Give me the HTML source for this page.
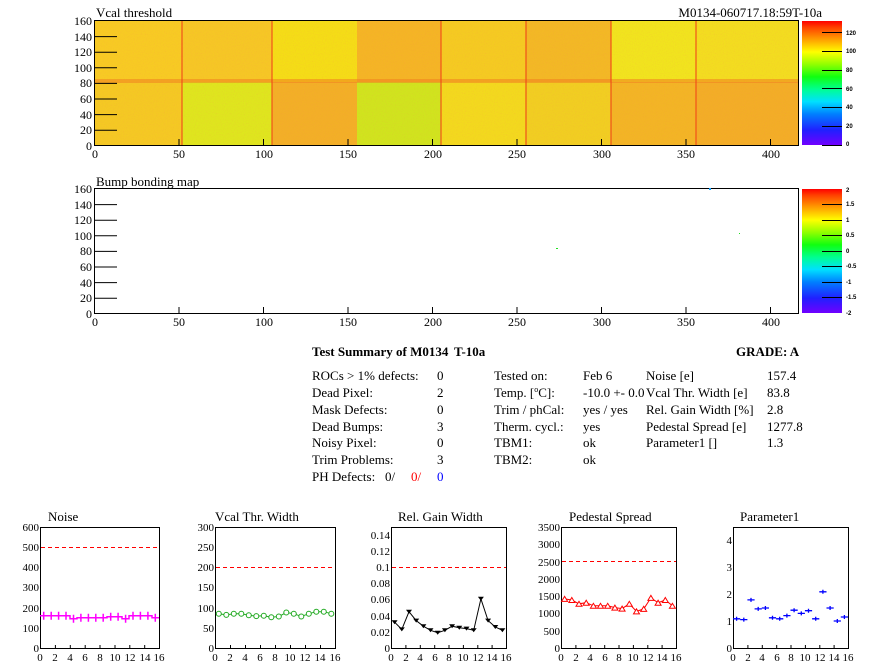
<!DOCTYPE html>
<html><head><meta charset="utf-8"><style>
html,body{margin:0;padding:0;background:#fff;}
svg{display:block;font-family:"Liberation Serif",serif;}
.t{font-size:13px;fill:#000}
.a{font-size:12px;fill:#000}
.s{font-size:11px;fill:#000}
.cb{font-size:6px;fill:#000;font-family:"Liberation Sans",sans-serif;font-weight:bold}
</style></head><body>
<svg width="896" height="672" viewBox="0 0 896 672" xmlns="http://www.w3.org/2000/svg">
<defs>
<linearGradient id="cg" x1="0" y1="1" x2="0" y2="0">
<stop offset="0" stop-color="#7000ff"/><stop offset="0.12" stop-color="#2020ff"/><stop offset="0.25" stop-color="#0080ff"/><stop offset="0.35" stop-color="#00e0ff"/><stop offset="0.45" stop-color="#00ff90"/><stop offset="0.55" stop-color="#10ff10"/><stop offset="0.65" stop-color="#90ff00"/><stop offset="0.75" stop-color="#ffff00"/><stop offset="0.85" stop-color="#ffa000"/><stop offset="0.95" stop-color="#ff4000"/><stop offset="1" stop-color="#ff0000"/>
</linearGradient>
<filter id="nz" filterUnits="userSpaceOnUse" x="95" y="21" width="703" height="124"><feTurbulence type="fractalNoise" baseFrequency="0.9" numOctaves="1" result="n"/><feColorMatrix type="matrix" values="0 0 0 0 0.95  0 0 0 -0.6 0.75  0 0 0 0 0.1  0 0 0 0.5 0"/></filter>
</defs>
<text class="t" x="96" y="17">Vcal threshold</text>
<text class="t" x="822" y="17" text-anchor="end">M0134-060717.18:59T-10a</text>
<g>
<rect x="95" y="21" width="87" height="61" fill="#f7cc1e"/>
<rect x="182" y="21" width="90" height="61" fill="#f5c820"/>
<rect x="272" y="21" width="85" height="61" fill="#f4e010"/>
<rect x="357" y="21" width="84" height="61" fill="#f4b420"/>
<rect x="441" y="21" width="85" height="61" fill="#f4cc1c"/>
<rect x="526" y="21" width="85" height="61" fill="#f2b820"/>
<rect x="611" y="21" width="85" height="61" fill="#f0e818"/>
<rect x="696" y="21" width="102" height="61" fill="#f2e01a"/>
<rect x="95" y="82" width="87" height="63" fill="#f4ca1e"/>
<rect x="182" y="82" width="90" height="63" fill="#dcea18"/>
<rect x="272" y="82" width="85" height="63" fill="#f2ae22"/>
<rect x="357" y="82" width="84" height="63" fill="#cce818"/>
<rect x="441" y="82" width="85" height="63" fill="#f2dc18"/>
<rect x="526" y="82" width="85" height="63" fill="#f0d01c"/>
<rect x="611" y="82" width="85" height="63" fill="#f2b420"/>
<rect x="696" y="82" width="102" height="63" fill="#f2ac22"/>
<rect x="95" y="21" width="703" height="124" filter="url(#nz)" opacity="0.45"/>
<rect x="95" y="79" width="703" height="4" fill="#f08020" opacity="0.55"/>
<g fill="#f04818" opacity="0.55">
<rect x="181" y="21" width="2" height="124"/><rect x="271" y="21" width="2" height="124"/><rect x="440" y="21" width="2" height="124"/><rect x="525" y="21" width="2" height="124"/><rect x="610" y="21" width="2" height="124"/><rect x="695" y="21" width="2" height="124"/>
</g>
</g>
<rect x="94.5" y="20.5" width="704" height="125" fill="none" stroke="#000"/>
<g stroke="#000"><path d="M95 36.6H117M95 52.2H117M95 67.8H117M95 83.4H117M95 99H117M95 114.6H117M95 130.2H117"/>
<path d="M94.5 145v-6M179 145v-6M263.5 145v-6M348 145v-6M432.5 145v-6M517 145v-6M601.5 145v-6M686 145v-6M770.5 145v-6"/></g>
<g class="a" text-anchor="end"><text x="92" y="25">160</text><text x="92" y="41">140</text><text x="92" y="56">120</text><text x="92" y="72">100</text><text x="92" y="87">80</text><text x="92" y="103">60</text><text x="92" y="119">40</text><text x="92" y="134">20</text><text x="92" y="150">0</text></g>
<g class="a" text-anchor="middle"><text x="95" y="158">0</text><text x="179" y="158">50</text><text x="264" y="158">100</text><text x="348" y="158">150</text><text x="433" y="158">200</text><text x="517" y="158">250</text><text x="602" y="158">300</text><text x="686" y="158">350</text><text x="771" y="158">400</text></g>
<rect x="802" y="21" width="40" height="124" fill="url(#cg)"/>
<path stroke="#000" d="M822 32.5H842M822 51.5H842M822 70.5H842M822 88.5H842M822 107.5H842M822 126.5H842M822 145.5H842"/>
<g class="cb"><text x="846" y="35">120</text><text x="846" y="53">100</text><text x="846" y="72">80</text><text x="846" y="91">60</text><text x="846" y="109">40</text><text x="846" y="128">20</text><text x="846" y="146">0</text></g>

<text class="t" x="96" y="186">Bump bonding map</text>
<rect x="94.5" y="188.5" width="704" height="125" fill="none" stroke="#000"/>
<rect x="709" y="188" width="2" height="2" fill="#10a0ff"/>
<rect x="556" y="248" width="2" height="1" fill="#20e020"/>
<rect x="739" y="233" width="1" height="1" fill="#20e020"/>
<g stroke="#000"><path d="M95 204.6H117M95 220.2H117M95 235.8H117M95 251.4H117M95 267H117M95 282.6H117M95 298.2H117"/>
<path d="M94.5 313v-6M179 313v-6M263.5 313v-6M348 313v-6M432.5 313v-6M517 313v-6M601.5 313v-6M686 313v-6M770.5 313v-6"/></g>
<g class="a" text-anchor="end"><text x="92" y="193">160</text><text x="92" y="209">140</text><text x="92" y="224">120</text><text x="92" y="240">100</text><text x="92" y="255">80</text><text x="92" y="271">60</text><text x="92" y="287">40</text><text x="92" y="302">20</text><text x="92" y="318">0</text></g>
<g class="a" text-anchor="middle"><text x="95" y="326">0</text><text x="179" y="326">50</text><text x="264" y="326">100</text><text x="348" y="326">150</text><text x="433" y="326">200</text><text x="517" y="326">250</text><text x="602" y="326">300</text><text x="686" y="326">350</text><text x="771" y="326">400</text></g>
<rect x="802" y="189" width="40" height="124" fill="url(#cg)"/>
<path stroke="#000" d="M822 204.5H842M822 220.5H842M822 235.5H842M822 251.5H842M822 266.5H842M822 282.5H842M822 297.5H842"/>
<g class="cb"><text x="846" y="192">2</text><text x="846" y="206">1.5</text><text x="846" y="222">1</text><text x="846" y="237">0.5</text><text x="846" y="253">0</text><text x="846" y="268">-0.5</text><text x="846" y="284">-1</text><text x="846" y="299">-1.5</text><text x="846" y="315">-2</text></g>

<g class="t">
<text x="312" y="356" font-weight="bold">Test Summary of M0134</text>
<text x="454" y="356" font-weight="bold">T-10a</text>
<text x="736" y="356" font-weight="bold">GRADE:  A</text>
<text x="312" y="380">ROCs &gt; 1% defects:</text><text x="437" y="380">0</text>
<text x="312" y="397">Dead Pixel:</text><text x="437" y="397">2</text>
<text x="312" y="414">Mask Defects:</text><text x="437" y="414">0</text>
<text x="312" y="431">Dead Bumps:</text><text x="437" y="431">3</text>
<text x="312" y="447">Noisy Pixel:</text><text x="437" y="447">0</text>
<text x="312" y="464">Trim Problems:</text><text x="437" y="464">3</text>
<text x="312" y="481">PH Defects:</text><text x="385" y="481">0/</text><text x="411" y="481" fill="#f00">0/</text><text x="437" y="481" fill="#00f">0</text>
<text x="494" y="380">Tested on:</text><text x="583" y="380">Feb 6</text>
<text x="494" y="397">Temp. [<tspan font-size="8" dy="-5">o</tspan><tspan dy="5">C]:</tspan></text><text x="583" y="397">-10.0 +- 0.0</text>
<text x="494" y="414">Trim / phCal:</text><text x="583" y="414">yes / yes</text>
<text x="494" y="431">Therm. cycl.:</text><text x="583" y="431">yes</text>
<text x="494" y="447">TBM1:</text><text x="583" y="447">ok</text>
<text x="494" y="464">TBM2:</text><text x="583" y="464">ok</text>
<text x="646" y="380">Noise [e]</text><text x="767" y="380">157.4</text>
<text x="646" y="397">Vcal Thr. Width [e]</text><text x="767" y="397">83.8</text>
<text x="646" y="414">Rel. Gain Width [%]</text><text x="767" y="414">2.8</text>
<text x="646" y="431">Pedestal Spread [e]</text><text x="767" y="431">1277.8</text>
<text x="646" y="447">Parameter1 []</text><text x="767" y="447">1.3</text>
</g>

<g class="t"><text x="48" y="521">Noise</text><text x="215" y="521">Vcal Thr. Width</text><text x="398" y="521">Rel. Gain Width</text><text x="569" y="521">Pedestal Spread</text><text x="740" y="521">Parameter1</text></g>
<g fill="none" stroke="#000">
<rect x="40.5" y="527.5" width="119" height="121"/>
<rect x="215.5" y="527.5" width="120" height="121"/>
<rect x="391.5" y="527.5" width="115" height="121"/>
<rect x="561.5" y="527.5" width="115" height="121"/>
<rect x="733.5" y="527.5" width="115" height="121"/>
<path d="M55.4 648v-3M70.3 648v-3M85.2 648v-3M100 648v-3M115 648v-3M129.8 648v-3M144.7 648v-3"/>
<path d="M230.5 648v-3M245.5 648v-3M260.5 648v-3M275.5 648v-3M290.5 648v-3M305.5 648v-3M320.5 648v-3"/>
<path d="M405.9 648v-3M420.3 648v-3M434.7 648v-3M449 648v-3M463.4 648v-3M477.8 648v-3M492.1 648v-3"/>
<path d="M575.9 648v-3M590.3 648v-3M604.7 648v-3M619 648v-3M633.4 648v-3M647.8 648v-3M662.1 648v-3"/>
<path d="M747.9 648v-3M762.3 648v-3M776.7 648v-3M791 648v-3M805.4 648v-3M819.8 648v-3M834.1 648v-3"/>
</g>
<g stroke="#f00" stroke-dasharray="4,3"><path d="M41 547.5H159"/><path d="M216 567.5H335"/><path d="M392 567.5H506"/><path d="M562 561.5H676"/></g>
<g class="s" text-anchor="end">
<text x="39" y="531">600</text><text x="39" y="551">500</text><text x="39" y="571">400</text><text x="39" y="591">300</text><text x="39" y="612">200</text><text x="39" y="632">100</text><text x="39" y="652">0</text>
<text x="214" y="531">300</text><text x="214" y="551">250</text><text x="214" y="571">200</text><text x="214" y="591">150</text><text x="214" y="612">100</text><text x="214" y="632">50</text><text x="214" y="652">0</text>
<text x="390" y="539">0.14</text><text x="390" y="555">0.12</text><text x="390" y="571">0.1</text><text x="390" y="587">0.08</text><text x="390" y="603">0.06</text><text x="390" y="620">0.04</text><text x="390" y="636">0.02</text><text x="390" y="652">0</text>
<text x="560" y="531">3500</text><text x="560" y="548">3000</text><text x="560" y="566">2500</text><text x="560" y="583">2000</text><text x="560" y="600">1500</text><text x="560" y="617">1000</text><text x="560" y="635">500</text><text x="560" y="652">0</text>
<text x="732" y="544">4</text><text x="732" y="571">3</text><text x="732" y="598">2</text><text x="732" y="625">1</text><text x="732" y="652">0</text>
</g>
<g class="s" text-anchor="middle">
<text x="40" y="661">0</text><text x="55" y="661">2</text><text x="70" y="661">4</text><text x="85" y="661">6</text><text x="100" y="661">8</text><text x="115" y="661">10</text><text x="130" y="661">12</text><text x="145" y="661">14</text><text x="159" y="661">16</text>
<text x="215" y="661">0</text><text x="230" y="661">2</text><text x="245" y="661">4</text><text x="260" y="661">6</text><text x="275" y="661">8</text><text x="290" y="661">10</text><text x="305" y="661">12</text><text x="320" y="661">14</text><text x="335" y="661">16</text>
<text x="391" y="661">0</text><text x="406" y="661">2</text><text x="420" y="661">4</text><text x="435" y="661">6</text><text x="449" y="661">8</text><text x="463" y="661">10</text><text x="478" y="661">12</text><text x="492" y="661">14</text><text x="506" y="661">16</text>
<text x="561" y="661">0</text><text x="576" y="661">2</text><text x="590" y="661">4</text><text x="605" y="661">6</text><text x="619" y="661">8</text><text x="633" y="661">10</text><text x="648" y="661">12</text><text x="662" y="661">14</text><text x="676" y="661">16</text>
<text x="733" y="661">0</text><text x="748" y="661">2</text><text x="762" y="661">4</text><text x="777" y="661">6</text><text x="791" y="661">8</text><text x="805" y="661">10</text><text x="820" y="661">12</text><text x="834" y="661">14</text><text x="848" y="661">16</text>
</g>
<g stroke="#f0f" stroke-width="1.5" fill="none">
<polyline points="40,615.7 70,615.7 70,618.8 77,618.8 77,617.7 107,617.7 107,616.7 122,616.7 122,618.8 129,618.8 129,615.7 152,615.7 152,617.7 159,617.7"/>
<path d="M43.7 611.7v8M51.2 611.7v8M58.6 611.7v8M66 611.7v8M73.5 614.8v8M80.9 613.7v8M88.4 613.7v8M95.8 613.7v8M103.2 613.7v8M110.7 612.7v8M118.1 612.7v8M125.6 614.8v8M133 611.7v8M140.4 611.7v8M147.9 611.7v8M155.3 613.7v8"/>
</g>
<g stroke="#2a2" stroke-width="1" fill="none">
<polyline points="218.8,613.7 226.3,614.9 233.8,613.7 241.3,613.7 248.8,615.3 256.3,616.1 263.8,615.7 271.3,617.3 278.8,616.5 286.3,612.5 293.8,613.7 301.3,616.5 308.8,613.7 316.3,611.7 323.8,611.7 331.3,613.7"/>
<g fill="#fff">
<circle cx="218.8" cy="613.7" r="2.5"/><circle cx="226.3" cy="614.9" r="2.5"/><circle cx="233.8" cy="613.7" r="2.5"/><circle cx="241.3" cy="613.7" r="2.5"/><circle cx="248.8" cy="615.3" r="2.5"/><circle cx="256.3" cy="616.1" r="2.5"/><circle cx="263.8" cy="615.7" r="2.5"/><circle cx="271.3" cy="617.3" r="2.5"/><circle cx="278.8" cy="616.5" r="2.5"/><circle cx="286.3" cy="612.5" r="2.5"/><circle cx="293.8" cy="613.7" r="2.5"/><circle cx="301.3" cy="616.5" r="2.5"/><circle cx="308.8" cy="613.7" r="2.5"/><circle cx="316.3" cy="611.7" r="2.5"/><circle cx="323.8" cy="611.7" r="2.5"/><circle cx="331.3" cy="613.7" r="2.5"/>
</g></g>
<g stroke="#000" fill="none">
<polyline points="394.6,622.2 401.8,629.4 409,611.7 416.2,620.6 423.4,626.2 430.5,630.3 437.7,632.7 444.9,630.3 452.1,626.2 459.3,627.8 466.5,628.6 473.7,630.3 480.9,598.8 488.1,620.6 495.3,627 502.4,630.3"/>
</g>
<g fill="#000">
<path d="M391.6 620.2h6l-3 4zM398.8 627.4h6l-3 4zM406 609.7h6l-3 4zM413.2 618.6h6l-3 4zM420.4 624.2h6l-3 4zM427.5 628.3h6l-3 4zM434.7 630.7h6l-3 4zM441.9 628.3h6l-3 4zM449.1 624.2h6l-3 4zM456.3 625.8h6l-3 4zM463.5 626.6h6l-3 4zM470.7 628.3h6l-3 4zM477.9 596.8h6l-3 4zM485.1 618.6h6l-3 4zM492.3 625h6l-3 4zM499.4 628.3h6l-3 4z"/>
</g>
<g stroke="#f00" fill="none">
<polyline points="564.6,598.9 571.8,600 579,603.8 586.2,602.7 593.4,605.8 600.5,605.8 607.7,605.8 614.9,607.6 622.1,608.6 629.3,603.8 636.5,611.4 643.7,608.9 650.9,597.9 658.1,602.7 665.3,600 672.4,605.8"/>
<g fill="#fff"><path d="M561.6 601.4h6l-3-5zM568.8 602.5h6l-3-5zM576 606.3h6l-3-5zM583.2 605.2h6l-3-5zM590.4 608.3h6l-3-5zM597.5 608.3h6l-3-5zM604.7 608.3h6l-3-5zM611.9 610.1h6l-3-5zM619.1 611.1h6l-3-5zM626.3 606.3h6l-3-5zM633.5 613.9h6l-3-5zM640.7 611.4h6l-3-5zM647.9 600.4h6l-3-5zM655.1 605.2h6l-3-5zM662.3 602.5h6l-3-5zM669.4 608.3h6l-3-5z"/></g>
</g>
<g stroke="#00f" stroke-width="1.3">
<path d="M733 618.8h7.2M736.6 616.8v4M740.2 619.6h7.2M743.8 617.6v4M747.4 599.9h7.2M751 597.9v4M754.6 608.9h7.2M758.2 606.9v4M761.8 608h7.2M765.4 606v4M768.9 617.8h7.2M772.5 615.8v4M776.1 618.8h7.2M779.7 616.8v4M783.3 615.6h7.2M786.9 613.6v4M790.5 610.2h7.2M794.1 608.2v4M797.7 613.4h7.2M801.3 611.4v4M804.9 610.7h7.2M808.5 608.7v4M812.1 618.8h7.2M815.7 616.8v4M819.3 591.8h7.2M822.9 589.8v4M826.5 608h7.2M830.1 606v4M833.7 621h7.2M837.3 619v4M840.8 617h7.2M844.4 615v4"/>
</g>
</svg>
</body></html>
